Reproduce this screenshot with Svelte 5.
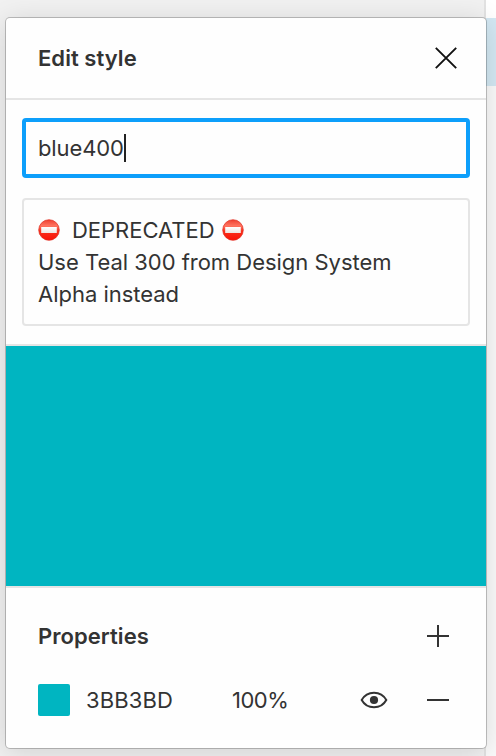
<script>
  let name = $state('blue400');
  const hex = '3BB3BD';
  const opacity = '100%';
</script>

{#snippet noEntry(id)}
  <svg class="emoji" viewBox="0 0 22 22" aria-hidden="true">
    <defs>
      <linearGradient id="{id}-red" x1="0" y1="0" x2="0" y2="1">
        <stop offset="0" stop-color="#ee4030" />
        <stop offset=".3" stop-color="#ff7561" />
        <stop offset=".55" stop-color="#f8301c" />
        <stop offset="1" stop-color="#fa1206" />
      </linearGradient>
      <linearGradient id="{id}-bar" x1="0" y1="0" x2="0" y2="1">
        <stop offset="0" stop-color="#fff" />
        <stop offset="1" stop-color="#eee4e0" />
      </linearGradient>
    </defs>
    <circle cx="11" cy="11" r="10.3" fill="url(#{id}-red)" stroke="#e02a1c" stroke-width=".7" />
    <rect x="3.2" y="8" width="15.6" height="6" fill="url(#{id}-bar)" />
  </svg>
{/snippet}

<div class="stage">
  <div class="canvas">
    <div class="selected"></div>
  </div>
  <section class="panel">
    <header>
      <h1>Edit style</h1>
      <svg width="24" height="24" viewBox="0 0 24 24" role="img" aria-label="Close">
        <path d="M1.8 1.8 22.2 22.2M22.2 1.8 1.8 22.2" fill="none" stroke="#111" stroke-width="1.9" />
      </svg>
    </header>
    <div class="fields">
      <div class="name"><span>{name}</span><i class="caret"></i></div>
      <div class="description">
        <div class="line">{@render noEntry('a')}<span class="deprecated">DEPRECATED</span>{@render noEntry('b')}</div>
        <div class="line">Use Teal 300 from Design System</div>
        <div class="line">Alpha instead</div>
      </div>
    </div>
    <div class="preview"></div>
    <div class="properties">
      <div class="heading">
        <h2>Properties</h2>
        <svg width="22" height="22" viewBox="0 0 22 22" role="img" aria-label="Add">
          <path d="M0 11h22M11 0v22" fill="none" stroke="#333" stroke-width="2" />
        </svg>
      </div>
      <div class="fill">
        <div class="swatch"></div>
        <span class="hex">{hex}</span>
        <span class="opacity">{opacity}</span>
        <svg class="eye" width="28" height="18" viewBox="0 0 28 18" role="img" aria-label="Visible">
          <path d="M1.7 9C4.4 4.1 8.7 1.7 14 1.7S23.6 4.1 26.3 9C23.6 13.9 19.3 16.3 14 16.3S4.4 13.9 1.7 9Z" fill="none" stroke="#333" stroke-width="2" />
          <circle cx="14" cy="9" r="4.1" fill="#333" />
        </svg>
        <svg width="22" height="22" viewBox="0 0 22 22" role="img" aria-label="Remove">
          <path d="M0 11h22" fill="none" stroke="#333" stroke-width="2" />
        </svg>
      </div>
    </div>
  </section>
</div>

<style>
  :global(body) { margin: 0; }
  .stage {
    box-sizing: border-box;
    position: relative;
    width: 496px;
    height: 756px;
    padding: 18px 10px 8px 6px;
    overflow: hidden;
    background: #f1f1f1;
    font-family: Inter, "Liberation Sans", sans-serif;
    font-size: 22px;
    color: #333;
  }
  .canvas {
    position: absolute;
    inset: 0 0 0 484px;
    box-sizing: border-box;
    padding-top: 18px;
    border-left: 2px solid #e2e2e2;
    background: linear-gradient(#fff 18px, #fafafa 18px);
  }
  .selected { height: 68px; background: #d3e8f3; }
  .panel {
    position: relative;
    width: 480px;
    height: 730px;
    background: #fefefe;
    border-radius: 4px;
    box-shadow: 0 0 0 1px rgba(0, 0, 0, .22), 0 4px 28px rgba(0, 0, 0, .14);
  }
  header {
    box-sizing: border-box;
    height: 82px;
    padding: 0 28px 0 32px;
    border-bottom: 2px solid #e5e5e5;
    display: flex;
    align-items: center;
    justify-content: space-between;
  }
  h1, h2 { margin: 0; font-size: 22px; font-weight: 600; line-height: 32px; letter-spacing: .05px; }
  .fields {
    box-sizing: border-box;
    height: 246px;
    padding: 18px 16px;
    border-bottom: 2px solid #e5e5e5;
    display: flex;
    flex-direction: column;
    gap: 20px;
  }
  .name {
    box-sizing: border-box;
    height: 60px;
    padding-left: 12px;
    border: 4px solid #0d9ffb;
    border-radius: 4px;
    display: flex;
    align-items: center;
    letter-spacing: -.12px;
  }
  .caret { width: 2px; height: 28px; background: #222; }
  .description {
    box-sizing: border-box;
    height: 128px;
    padding: 14px;
    border: 2px solid #e5e5e5;
    border-radius: 4px;
  }
  .line { height: 32px; line-height: 32px; white-space: nowrap; display: flex; align-items: center; letter-spacing: -.02px; }
  .emoji { width: 22px; height: 22px; }
  .deprecated { margin: 0 7px 0 12px; letter-spacing: -.03px; }
  .preview { height: 240px; background: #00b5c1; }
  .properties { border-top: 2px solid #e5e5e5; padding: 16px 37px 0 32px; }
  .heading, .fill { height: 64px; display: flex; align-items: center; }
  .heading { justify-content: space-between; }
  .swatch { width: 32px; height: 32px; border-radius: 2px; background: #00b5c1; }
  .hex { width: 146px; margin-left: 16px; letter-spacing: .12px; }
  .opacity { width: 128px; letter-spacing: -.5px; }
  .eye { margin-right: 39px; }
</style>
